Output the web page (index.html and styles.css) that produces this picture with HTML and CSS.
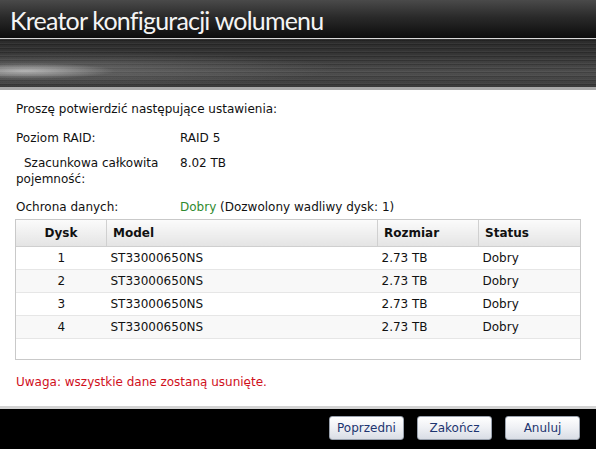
FILE: index.html
```html
<!DOCTYPE html>
<html lang="pl">
<head>
<meta charset="utf-8">
<title>Kreator konfiguracji wolumenu</title>
<link rel="stylesheet" href="styles.css">
</head>
<body>
<div class="wizard">
  <header class="titlebar">
    <h1 class="title">Kreator konfiguracji wolumenu</h1>
  </header>
  <div class="band"></div>

  <main class="content">
    <p class="intro">Proszę potwierdzić następujące ustawienia:</p>
    <dl class="summary">
      <dt>Poziom RAID:</dt>
      <dd>RAID 5</dd>
      <dt class="indent">Szacunkowa całkowita pojemność:</dt>
      <dd>8.02 TB</dd>
      <dt class="spaced">Ochrona danych:</dt>
      <dd class="spaced"><span class="good">Dobry</span> (Dozwolony wadliwy dysk: 1)</dd>
    </dl>

    <div class="grid">
      <table class="disks">
        <thead>
          <tr>
            <th class="c-disk">Dysk</th>
            <th class="c-model">Model</th>
            <th class="c-size">Rozmiar</th>
            <th class="c-status">Status</th>
          </tr>
        </thead>
        <tbody>
          <tr><td class="c-disk">1</td><td>ST33000650NS</td><td>2.73 TB</td><td>Dobry</td></tr>
          <tr><td class="c-disk">2</td><td>ST33000650NS</td><td>2.73 TB</td><td>Dobry</td></tr>
          <tr><td class="c-disk">3</td><td>ST33000650NS</td><td>2.73 TB</td><td>Dobry</td></tr>
          <tr><td class="c-disk">4</td><td>ST33000650NS</td><td>2.73 TB</td><td>Dobry</td></tr>
        </tbody>
      </table>
    </div>

    <p class="warning">Uwaga: wszystkie dane zostaną usunięte.</p>
  </main>

  <footer class="actions">
    <button class="btn">Poprzedni</button>
    <button class="btn">Zakończ</button>
    <button class="btn">Anuluj</button>
  </footer>
</div>
</body>
</html>
```

FILE: styles.css
```css
html, body {
  margin: 0;
  padding: 0;
  background: #000;
}

.wizard {
  width: 596px;
  height: 449px;
  display: flex;
  flex-direction: column;
  background: #fff;
  font-family: "DejaVu Sans", Verdana, sans-serif;
  font-size: 12px;
  color: #111;
}

/* dark title strip */
.titlebar {
  height: 38px;
  background: linear-gradient(#4a4a4a 0%, #2a2a2a 45%, #0c0c0c 100%);
  display: flex;
  align-items: center;
  padding-left: 10px;
  box-sizing: border-box;
}

.title {
  margin: 0;
  font-family: "Lato", "DejaVu Sans", sans-serif;
  font-weight: normal;
  font-size: 25px;
  letter-spacing: -0.8px;
  color: #f4f4f4;
  line-height: 1;
  padding-top: 2px;
}

/* brushed metal band under the title */
.band {
  height: 48px;
  border-top: 1px solid #d8d8d8;
  border-bottom: 3px solid #a9a9a9;
  background:
    radial-gradient(ellipse 90px 8px at 25px 32px, rgba(235,235,235,0.6), rgba(235,235,235,0) 100%),
    radial-gradient(ellipse 280px 18px at 60px 30px, rgba(150,150,150,0.35), rgba(150,150,150,0) 100%),
    repeating-linear-gradient(180deg,
      rgba(255,255,255,0.06) 0px, rgba(255,255,255,0.06) 1px,
      rgba(0,0,0,0.12) 1px, rgba(0,0,0,0.12) 2px,
      rgba(255,255,255,0.02) 2px, rgba(255,255,255,0.02) 4px),
    linear-gradient(180deg, #262626 0%, #333 35%, #4a4a4a 70%, #363636 100%);
}

.content {
  flex: 1;
  padding: 11px 16px 0 16px;
  box-sizing: border-box;
}

.intro {
  margin: 0;
  line-height: 16px;
}

.summary {
  margin: 13px 0 0 0;
  display: grid;
  grid-template-columns: 164px 1fr;
  row-gap: 9px;
  line-height: 16px;
}

.summary dt, .summary dd {
  margin: 0;
}

.summary .spaced {
  margin-top: 3px;
}

.summary dt.indent {
  text-indent: 8px;
  width: 152px;
}

.good {
  color: #2f8a2f;
}

/* disk list */
.grid {
  margin: 4px 0 0 -1px;
  width: 566px;
  height: 141px;
  border: 1px solid #c9c9c9;
  box-sizing: border-box;
}

.disks {
  width: 100%;
  border-collapse: collapse;
  table-layout: fixed;
}

.disks th {
  height: 26px;
  padding: 0 0 0 6px;
  text-align: left;
  font-weight: bold;
  background: linear-gradient(#fbfbfb, #e4e4e4);
  border-bottom: 1px solid #cfcfcf;
  border-left: 1px solid #d0d0d0;
}

.disks th:first-child {
  border-left: none;
}

.disks td {
  height: 22px;
  padding: 0 0 0 4px;
  border-bottom: 1px solid #e6e6e6;
}

.disks tbody tr:nth-child(even) td {
  background: #f8f8f8;
}

.disks .c-disk {
  width: 90px;
  text-align: center;
  padding: 0;
}

.disks .c-model { width: 264px; }
.disks .c-size { width: 94px; }

.warning {
  margin: 14px 0 0 0;
  line-height: 16px;
  color: #d0101c;
}

/* bottom button bar */
.actions {
  height: 43px;
  border-top: 3px solid #d3d3d3;
  background: #000;
  display: flex;
  justify-content: flex-end;
  align-items: flex-start;
  gap: 13px;
  padding: 7px 16px 0 0;
  box-sizing: border-box;
}

.btn {
  width: 75px;
  height: 24px;
  border: 1px solid #9aa2ae;
  border-radius: 3px;
  background: linear-gradient(#ffffff 0%, #eef0f4 50%, #d9dde5 100%);
  font-family: "DejaVu Sans", Verdana, sans-serif;
  font-size: 12px;
  color: #1d3570;
  padding: 0;
}
```
